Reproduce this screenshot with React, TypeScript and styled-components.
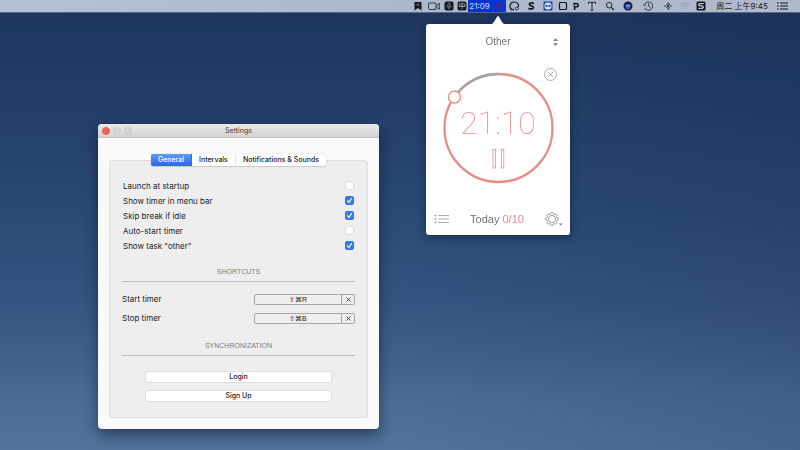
import React, { useState } from "react";
import styled, { createGlobalStyle, css } from "styled-components";

const ui = `Inter, "Liberation Sans", "Noto Sans CJK SC", sans-serif`;
const helv = `"Liberation Sans", Arial, sans-serif`;
const red = "#e88c84";

const GlobalStyle = createGlobalStyle`
  * { box-sizing: border-box; }
  body { margin: 0; }
  button, select, input { margin: 0; padding: 0; border: 0; background: none; color: inherit; font: inherit; }
  svg { display: block; }
`;

const Desktop = styled.div`
  position: relative;
  display: flex;
  flex-direction: column;
  min-height: 100vh;
  overflow: hidden;
  font: 8px/12px ${ui};
  color: #1d1d1f;
  background:
    linear-gradient(90deg, rgba(20, 34, 66, 0) 50%, rgba(20, 34, 66, 0.18) 100%),
    linear-gradient(180deg, #1e355c 0%, #213c66 18%, #294874 45%, #345380 66%, #40618c 80%, #4a6b95 88%, #50729d 100%);
`;

const MenuBar = styled.header`
  display: flex;
  justify-content: flex-end;
  height: 13px;
  padding-right: 10px;
  background: linear-gradient(90deg, #b4c0d5, #abb8ce 50%, #b1bacb);
  border-bottom: 1px solid #56688a;
  color: #15171c;
`;

const MenuItem = styled.button<{ $w: number; $active?: boolean }>`
  display: flex;
  align-items: center;
  justify-content: center;
  gap: 5px;
  width: ${(p) => p.$w}px;
  height: 12px;
  white-space: nowrap;
  ${(p) =>
    p.$active &&
    css`
      background: #0736cf;
      color: #d3defa;
    `}
`;

const Workspace = styled.main`
  flex: 1;
`;

const Window = styled.section`
  position: absolute;
  left: 98px;
  top: 124px;
  width: 281px;
  border-radius: 4px;
  background: #fafafa;
  box-shadow: 0 6px 14px rgba(5, 15, 35, 0.5), 0 0 1px rgba(0, 0, 0, 0.6);
`;

const TitleBar = styled.div`
  display: grid;
  grid-template-columns: 1fr auto 1fr;
  align-items: center;
  height: 14px;
  padding: 0 4px;
  border-radius: 4px 4px 0 0;
  border-bottom: 1px solid #c4c4c4;
  background: linear-gradient(#e9e9e9, #d4d4d4);
`;

const Lights = styled.div`
  display: flex;
  gap: 3px;
`;

const Light = styled.button<{ $close?: boolean }>`
  width: 8px;
  height: 8px;
  border-radius: 50%;
  border: 1px solid ${(p) => (p.$close ? "#e0625a" : "#cbcbcb")};
  background: ${(p) => (p.$close ? "#f2605a" : "#d6d6d6")};
`;

const Title = styled.h1`
  margin: 0;
  font: 400 7px/12px ${ui};
  color: #3c3c3c;
`;

const WindowBody = styled.div`
  display: flex;
  flex-direction: column;
  align-items: center;
  padding: 16px 11px 11px;
`;

const Tabs = styled.div`
  display: flex;
  height: 12px;
  margin-bottom: -6px;
  border-radius: 2px;
  background: #fff;
  box-shadow: 0 0 1px rgba(0, 0, 0, 0.35), 0 1px 1px rgba(0, 0, 0, 0.12);
  z-index: 1;
`;

const Tab = styled.button<{ $on: boolean }>`
  padding: 0 7px;
  font-size: 7px;
  font-weight: 500;
  border-right: 1px solid #e4e4e4;
  &:last-child { border-right: 0; }
  ${(p) =>
    p.$on &&
    css`
      border-radius: 2px 0 0 2px;
      border-right-color: #2f6ce0;
      background: linear-gradient(#619bf7, #2a66e6);
      color: #fff;
    `}
`;

const Panel = styled.div`
  width: 100%;
  padding: 17px 12px 15px;
  border: 1px solid #e0e0e0;
  border-radius: 3px;
  background: #eeeeee;
`;

const Option = styled.label`
  display: flex;
  justify-content: space-between;
  align-items: center;
  height: 15px;
  padding: 0 1px;
`;

const CheckBox = styled.input`
  appearance: none;
  width: 9px;
  height: 9px;
  border: 1px solid #dadada;
  border-radius: 2px;
  background: #fff;
  &:checked {
    border-color: #3474e2;
    background: #3b7ceb;
  }
`;

const CheckCell = styled.span`
  display: grid;
  > * { grid-area: 1 / 1; }
  > svg { pointer-events: none; }
`;

const Heading = styled.h2`
  margin: 0 0 11px;
  padding-bottom: 3px;
  border-bottom: 1px solid #bdbdbd;
  font: 400 7px/12px ${helv};
  color: #7b7b7b;
  text-align: center;
`;

const OptionList = styled.div`
  margin-bottom: 13px;
`;

const ShortcutList = styled.div`
  display: flex;
  flex-direction: column;
  gap: 7px;
  margin-bottom: 16px;
`;

const ShortcutRow = styled.div`
  display: flex;
  justify-content: space-between;
  align-items: center;
  height: 12px;
`;

const Recorder = styled.div`
  display: flex;
  width: 101px;
  height: 11px;
  border: 1px solid #a9a9a9;
  border-radius: 2px;
`;

const Keys = styled.button`
  flex: 1;
  border-right: 1px solid #a9a9a9;
  font: 7px/9px "Liberation Sans", "DejaVu Sans", sans-serif;
`;

const Clear = styled.button`
  display: grid;
  place-items: center;
  width: 12px;
`;

const Actions = styled.div`
  display: flex;
  flex-direction: column;
  gap: 7px;
  padding: 4px 23px 0;
`;

const Action = styled.button`
  height: 12px;
  border: 1px solid #dedede;
  border-radius: 2px;
  background: #fff;
  font: 500 7px/10px ${ui};
`;

const Popover = styled.section`
  position: absolute;
  right: 230px;
  top: 16px;
  width: 144px;
  display: flex;
  flex-direction: column;
  align-items: center;
  filter: drop-shadow(0 3px 5px rgba(5, 15, 35, 0.45));
  font-family: ${helv};
`;

const Card = styled.div`
  width: 100%;
  border-radius: 3px;
  background: #fff;
`;

const TaskPicker = styled.label`
  display: grid;
  align-items: center;
  height: 36px;
  > * { grid-area: 1 / 1; }
  > svg { justify-self: end; margin-right: 12px; pointer-events: none; }
`;

const TaskSelect = styled.select`
  appearance: none;
  width: 100%;
  height: 16px;
  font-size: 10px;
  line-height: 16px;
  color: #757575;
  text-align: center;
  text-align-last: center;
`;

const Dial = styled.div`
  position: relative;
  display: grid;
  justify-items: center;
  padding: 11px 0 17px;
`;

const DialRing = styled.svg`
  grid-area: 1 / 1;
`;

const DialContent = styled.div`
  grid-area: 1 / 1;
  display: flex;
  flex-direction: column;
  align-items: center;
  gap: 8px;
  padding-top: 34px;
`;

const Time = styled.time`
  font: 100 32px/36px Roboto, sans-serif;
  color: ${red};
`;

const CancelButton = styled.button`
  position: absolute;
  right: 13px;
  top: 8px;
`;

const Footer = styled.footer`
  display: flex;
  align-items: center;
  justify-content: space-between;
  height: 33px;
  padding: 0 7px 0 8px;
`;

const Today = styled.p`
  margin: 0;
  font-size: 11px;
  line-height: 16px;
  color: #707070;
`;

const Count = styled.span`
  color: ${red};
`;

const Check = () => (
  <svg width="9" height="9" viewBox="0 0 9 9" fill="none" stroke="#fff" strokeWidth="1.2" strokeLinecap="round">
    <path d="M2.4 4.8 3.9 6.4 6.6 2.5" />
  </svg>
);

const Cross = ({ s = 5, c = "#333" }: { s?: number; c?: string }) => (
  <svg width={s} height={s} viewBox="0 0 5 5" stroke={c} strokeWidth="0.9">
    <path d="M.5.5l4 4M4.5.5l-4 4" />
  </svg>
);

const Glyph = ({ w = 10, children }: { w?: number; children: React.ReactNode }) => (
  <svg width={w} height="10" viewBox={`0 0 ${w} 10`} fill="none" stroke="currentColor" strokeWidth="1">
    {children}
  </svg>
);

const leftIcons: [string, number, React.ReactNode][] = [
  ["Bookmark", 16, <Glyph><path d="M1.5 1h7v8.5L5 7 1.5 9.5z" fill="currentColor" stroke="none" /><path d="M3.4 3.8h3.2M5 2.3v3" stroke="#8f9bb0" strokeWidth=".6" /></Glyph>],
  ["Camera", 16, <Glyph w={12}><rect x=".5" y="2" width="7.5" height="6.5" rx="1" strokeWidth=".8" /><path d="M8.3 4.7 11.3 2.3v6L8.3 5.9" strokeWidth=".8" /></Glyph>],
  ["Microphone", 13, <Glyph><rect x=".5" y="0.5" width="9" height="9" rx="2" fill="currentColor" stroke="none" /><rect x="4" y="2" width="2" height="3.6" rx="1" stroke="#a9b4c8" strokeWidth=".6" /><path d="M3 4.6c0 3 4 3 4 0M5 7v1.4" stroke="#a9b4c8" strokeWidth=".6" /></Glyph>],
  ["Grid", 13, <Glyph><rect x=".5" y="0.5" width="9" height="9" rx="2" fill="currentColor" stroke="none" /><path d="M2.2 2.8h5.600v2.500H2.200zM1.800 5.300h6.400M5 1.800v6.700" stroke="#a9b4c8" strokeWidth=".7" /></Glyph>],
];

const rightIcons: [string, number, React.ReactNode][] = [
  ["Chat", 16, <Glyph w={11}><path d="M2.700 8.500C-.3 6.500.8 1 5 1c4 0 5 3 4.200 5M2.700 8.500l-.2 1M2.500 9l2.500-.700" strokeWidth="1.200" /><path d="M7.700 5.800 9.700 7.500 7.700 9.200 5.900 7.500z" strokeWidth=".9" /></Glyph>],
  ["S", 18, <Glyph><path d="M7.900 2.600C6.500 1.600 3.300 1.600 3.300 3.300c0 2 4.200 1 4.200 3.200 0 1.800-3.500 1.800-5 .7" strokeWidth="1.700" /></Glyph>],
  ["Remote", 16, <Glyph><rect x=".5" y=".5" width="9" height="9" rx="1" fill="#1d47a5" stroke="none" /><circle cx="5" cy="5" r="3.600" fill="#dce6f5" stroke="none" /><path d="M1.800 5 3.800 3.400v1h2.400v-1L8.200 5 6.200 6.600v-1H3.800v1z" fill="#1d47a5" stroke="none" /></Glyph>],
  ["Square", 14, <Glyph><rect x="1.500" y="1.500" width="7" height="7" rx="1" strokeWidth="1.200" /></Glyph>],
  ["P", 12, <Glyph><path d="M3.600 9V5M3.200 4.600V2.500H5c3 0 3 3.300 0 3.300H4" strokeWidth="1.600" /></Glyph>],
  ["Text", 20, <Glyph><path d="M1.500 3V1.300h7V3M5 1.300v7.900M3.600 9.200h2.800" strokeWidth=".9" /></Glyph>],
  ["Search", 16, <Glyph><circle cx="4.200" cy="4.200" r="2.800" strokeWidth=".9" /><path d="M6.300 6.300 9 9" strokeWidth="1.100" /></Glyph>],
  ["Siri", 20, <Glyph><circle cx="5" cy="5" r="4.500" fill="#17194f" stroke="none" /><circle cx="5" cy="5" r="2.300" fill="#3c62c4" stroke="none" /><path d="M2.500 5.500C4 3 5 6.500 7.500 4" stroke="#8fc4f5" strokeWidth="1" /><path d="M3 7C4.500 8 6 7.500 7 6.500" stroke="#a04bd0" strokeWidth=".9" /></Glyph>],
  ["Time Machine", 20, <Glyph w={11}><path d="M1.700 3.200A4.200 4.200 0 1 1 1.700 7M.3 3.300l1.300 1.600L3 3.500" strokeWidth=".8" /><path d="M5.700 2.400V5.200L7.500 6.600" strokeWidth=".8" /></Glyph>],
  ["Bluetooth", 20, <Glyph><path d="M3.200 3.300 6.800 6.500 5 8.500v-7l1.800 1.800L3.200 6.600" strokeWidth=".7" /><path d="M1.200 5h2M6.800 5h2" strokeWidth="1.200" strokeDasharray="1 .4" /></Glyph>],
  ["Wi-Fi", 14, <Glyph w={12}><g stroke="#8c98ad" strokeWidth=".9"><path d="M1 4c3-2.700 7-2.700 10 0M2.700 5.800c2-1.800 4.600-1.800 6.600 0M4.400 7.400c1-.8 2.200-.8 3.200 0" /></g></Glyph>],
  ["Input Source", 18, <Glyph><rect x=".5" y=".5" width="9" height="9" rx="1.500" fill="currentColor" stroke="none" /><path d="M7.700 2.700H4.200C2 2.700 2 4.500 4 4.800l2 .3c2 .3 1.800 2.200-.2 2.200H2.300" stroke="#c2cbdb" strokeWidth="1.200" /></Glyph>],
];

const options: [string, boolean][] = [
  ["Launch at startup", false],
  ["Show timer in menu bar", true],
  ["Skip break if idle", true],
  ["Auto-start timer", false],
  ["Show task \"other\"", true],
];

function OptionRow({ label, initial }: { label: string; initial: boolean }) {
  const [on, setOn] = useState(initial);
  return (
    <Option>
      {label}
      <CheckCell>
        <CheckBox type="checkbox" checked={on} onChange={() => setOn(!on)} />
        {on && <Check />}
      </CheckCell>
    </Option>
  );
}

function SettingsWindow() {
  const [tab, setTab] = useState("General");
  return (
    <Window aria-label="Settings">
      <TitleBar>
        <Lights>
          <Light $close aria-label="Close" />
          <Light aria-label="Minimize" />
          <Light aria-label="Zoom" />
        </Lights>
        <Title>Settings</Title>
      </TitleBar>
      <WindowBody>
        <Tabs role="tablist">
          {["General", "Intervals", "Notifications & Sounds"].map((t) => (
            <Tab key={t} role="tab" aria-selected={t === tab} $on={t === tab} onClick={() => setTab(t)}>
              {t}
            </Tab>
          ))}
        </Tabs>
        <Panel>
          <OptionList>
            {options.map(([label, initial]) => (
              <OptionRow key={label} label={label} initial={initial} />
            ))}
          </OptionList>
          <Heading>SHORTCUTS</Heading>
          <ShortcutList>
            {[["Start timer", "⇧⌘R"], ["Stop timer", "⇧⌘B"]].map(([label, keys]) => (
              <ShortcutRow key={label}>
                <span>{label}</span>
                <Recorder>
                  <Keys aria-label={`${label} shortcut`}>{keys}</Keys>
                  <Clear aria-label={`Clear ${label} shortcut`}><Cross /></Clear>
                </Recorder>
              </ShortcutRow>
            ))}
          </ShortcutList>
          <Heading>SYNCHRONIZATION</Heading>
          <Actions>
            <Action>Login</Action>
            <Action>Sign Up</Action>
          </Actions>
        </Panel>
      </WindowBody>
    </Window>
  );
}

function TimerPopover() {
  return (
    <Popover aria-label="Timer">
      <svg width="14" height="8" viewBox="0 0 14 8"><path d="M1 8C4 6 5 1 7 0c2 1 3 6 6 8z" fill="#fff" /></svg>
      <Card>
        <TaskPicker>
          <TaskSelect aria-label="Task"><option>Other</option></TaskSelect>
          <svg width="5" height="8" viewBox="0 0 5 8" fill="#8a8a8a"><path d="M0 3 2.500 0 5 3zM0 5h5L2.500 8z" /></svg>
        </TaskPicker>
        <Dial>
          <DialRing width="114" height="114" viewBox="0 0 114 114" fill="none">
            <circle cx="57.500" cy="57" r="54" stroke={red} strokeWidth="2.300" />
            <path d="M14 25A54 54 0 0 1 57.500 3" stroke="#a3a3a3" strokeWidth="2.300" />
            <circle cx="13.500" cy="26" r="6" fill="#fff" stroke={red} strokeWidth="1.300" />
          </DialRing>
          <DialContent>
            <Time>21:10</Time>
            <button aria-label="Pause">
              <svg width="13" height="20" viewBox="0 0 13 20" fill="none" stroke={red} strokeWidth=".8">
                <rect x="1" y=".5" width="2.500" height="18.500" />
                <rect x="9.300" y=".5" width="2.500" height="18.500" />
              </svg>
            </button>
          </DialContent>
          <CancelButton aria-label="Cancel timer">
            <svg width="13" height="13" viewBox="0 0 13 13" fill="none" stroke="#9a9a9a" strokeWidth=".8">
              <circle cx="6.500" cy="6.500" r="6" /><path d="M4 4l5 5M9 4 4 9" />
            </svg>
          </CancelButton>
        </Dial>
        <Footer>
          <button aria-label="Task list">
            <svg width="15" height="10" viewBox="0 0 15 10" fill="none" stroke="#a2a2a2" strokeWidth=".9">
              <path d="M4.500 1.500H15M4.500 5H15M4.500 8.500H15" />
              <path d="M.5 1.500h2M.5 5h2M.5 8.500h2" strokeWidth="1.300" />
            </svg>
          </button>
          <Today>Today <Count>0/10</Count></Today>
          <button aria-label="Preferences">
            <svg width="18" height="14" viewBox="0 0 18 14" fill="none" stroke="#8c8c8c" strokeWidth=".8">
              <circle cx="7" cy="7" r="3.600" />
              <path d="M5.700 2 6 .7h2L8.300 2l1.300.5 1.200-.7 1.400 1.400-.7 1.200.5 1.300 1.300.3v2l-1.300.3-.5 1.300.7 1.200-1.400 1.400-1.200-.7-1.300.5-.3 1.300H6L5.700 12l-1.300-.5-1.200.7-1.400-1.400.7-1.200L2 8.300.7 8V6L2 5.700l.5-1.300-.7-1.200 1.400-1.400 1.200.7z" />
              <path d="M14 11.500h3.500L15.700 13.500z" fill="#777" stroke="none" />
            </svg>
          </button>
        </Footer>
      </Card>
    </Popover>
  );
}

export default function App() {
  return (
    <Desktop>
      <GlobalStyle />
      <MenuBar>
        {leftIcons.map(([name, w, icon]) => <MenuItem key={name} $w={w} aria-label={name}>{icon}</MenuItem>)}
        <MenuItem $w={38} $active>
          21:09
          <svg width="10" height="10" viewBox="0 0 10 10" fill="none" stroke="#5a2390" strokeWidth="1">
            <circle cx="5" cy="5.500" r="3.800" /><path d="M5 5.500 6.500 2M3.500 2.500 7 1" />
          </svg>
        </MenuItem>
        {rightIcons.map(([name, w, icon]) => <MenuItem key={name} $w={w} aria-label={name}>{icon}</MenuItem>)}
        <MenuItem $w={64}>周二 上午9:45</MenuItem>
        <MenuItem $w={16} aria-label="Notification Center">
          <Glyph w={11}><path d="M3 2h8M3 5h8M3 8h8" strokeWidth="1.200" /><path d="M0 2h1.700M0 5h1.700M0 8h1.700" strokeWidth="1.200" /></Glyph>
        </MenuItem>
      </MenuBar>
      <Workspace>
        <SettingsWindow />
        <TimerPopover />
      </Workspace>
    </Desktop>
  );
}
